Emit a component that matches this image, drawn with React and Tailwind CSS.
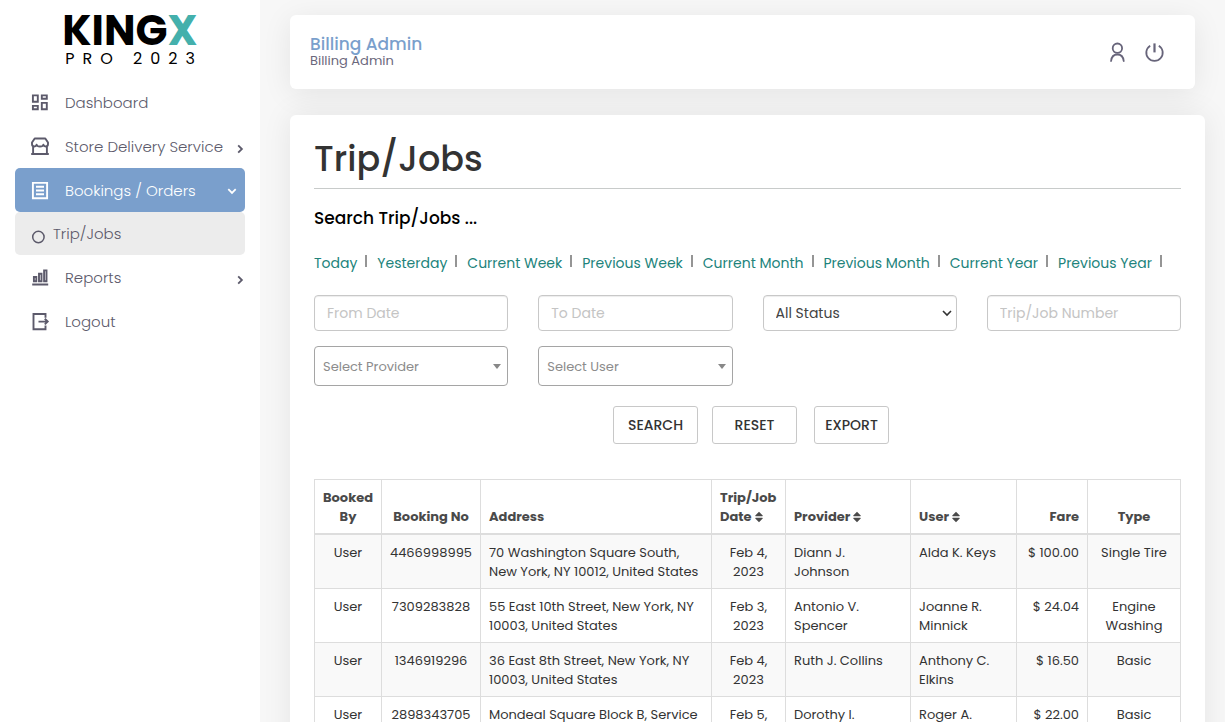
import React from "react";

function Svg({ children, className = "size-5" }) {
  return (
    <svg viewBox="0 0 20 20" className={className + " shrink-0"} fill="none" stroke="currentColor" strokeWidth="1.9" aria-hidden="true">
      {children}
    </svg>
  );
}

const DashboardIcon = () => (
  <Svg>
    <path d="M2.900 2.400h4.900v6.400H2.900zM11.800 2.400h5v3.400h-5zM2.900 12.900h4.900v3.400H2.900zM11.800 9.900h5v6.400h-5z" />
  </Svg>
);
const StoreIcon = () => (
  <Svg>
    <path d="M4.700 1.500h10.600L18 5.600v1.500c0 3.100-4 3.100-4.600.5-.6 2.600-6.200 2.600-6.800 0C6 10.200 2 10.200 2 7.100V5.600zM3.100 9v8M16.900 9v8M1.200 17h17.600" strokeLinejoin="round" />
  </Svg>
);
const OrdersIcon = () => (
  <Svg>
    <path d="M2.900 1.900h14.200v15.400H2.900zM6 5.800h8M6 9.500h8M6 13.200h8" />
  </Svg>
);
const ReportsIcon = () => (
  <Svg>
    <path d="M3.900 9h2.400v4.200H3.900zM9 5.800h2.500v7.400H9zM14.100 2.400h2.400v10.800h-2.400zM2.200 16.500h16" />
  </Svg>
);
const LogoutIcon = () => (
  <Svg>
    <path d="M15.500 5.700V2H3.500v15.200h12v-3.700M8.500 9.600h9M14.800 6.800l2.900 2.800-2.900 2.800" />
  </Svg>
);
const Chevron = ({ down }) => (
  <svg viewBox="0 0 10 10" className="size-[10px] shrink-0" fill="none" stroke="currentColor" strokeWidth="1.8" aria-hidden="true">
    <path d={down ? "M1.300 3.200L5 6.900l3.700-3.700" : "M3.200 1.300L6.900 5 3.200 8.700"} />
  </svg>
);
const SortIcon = () => (
  <svg viewBox="0 0 8 12" className="ml-[3px] inline-block h-3 w-2 align-[-2px]" fill="currentColor" aria-hidden="true">
    <path d="M4 .8L7.700 4.400q.4.800-.4.800H.7q-.8 0-.4-.8zM4 11.200L7.700 7.600q.4-.8-.4-.8H.7q-.8 0-.4.800z" />
  </svg>
);

function NavItem({ icon, label, chevron, active }) {
  return (
    <a
      href="#"
      className={
        "flex h-11 items-center rounded-[5px] pt-[2px] pl-[15px] text-[15px] font-light " +
        (active ? "bg-[#7a9fcc] pr-2 text-white" : "text-[#5c5a6b]")
      }
    >
      {icon}
      <span className="ml-[15px] flex-1 whitespace-nowrap">{label}</span>
      {chevron && <span className={active ? "" : "pt-1"}><Chevron down={active} /></span>}
    </a>
  );
}

const ranges = ["Today", "Yesterday", "Current Week", "Previous Week", "Current Month", "Previous Month", "Current Year", "Previous Year"];

const rows = [
  ["User", "4466998995", "70 Washington Square South,\nNew York, NY 10012, United States", "Feb 4,\n2023", "Diann J.\nJohnson", "Alda K. Keys", "$ 100.00", "Single Tire"],
  ["User", "7309283828", "55 East 10th Street, New York, NY\n10003, United States", "Feb 3,\n2023", "Antonio V.\nSpencer", "Joanne R.\nMinnick", "$ 24.04", "Engine\nWashing"],
  ["User", "1346919296", "36 East 8th Street, New York, NY\n10003, United States", "Feb 4,\n2023", "Ruth J. Collins", "Anthony C.\nElkins", "$ 16.50", "Basic"],
  ["User", "2898343705", "Mondeal Square Block B, Service", "Feb 5,\n2023", "Dorothy I.", "Roger A.", "$ 22.00", "Basic"],
];

const aligns = ["text-center", "text-center", "text-left", "text-center", "text-left", "text-left", "text-right", "text-center"];
const headAligns = ["text-center", "text-center", "text-left", "text-left", "text-left", "text-left", "text-right", "text-center"];
const heads = [
  "Booked\nBy",
  "Booking No",
  "Address",
  <>{"Trip/Job\nDate"}<SortIcon /></>,
  <>Provider<SortIcon /></>,
  <>User<SortIcon /></>,
  "Fare",
  "Type",
];

const field = "h-9 w-full rounded-[4px] border border-[#c8c8c8] bg-white px-3 text-[14px] text-[#444] shadow-[inset_0_1px_1px_rgba(0,0,0,0.075)] placeholder:text-[#c4c4c4] outline-none";
const button = "h-[38px] rounded-[3px] border border-[#c8c8c8] bg-white text-[14px] font-medium text-[#333]";

function ComboBox({ label }) {
  return (
    <div className="relative">
      <select aria-label={label} className="h-10 w-full appearance-none rounded-[4px] border border-[#a5a5a5] bg-white px-2 pt-px text-[13px] text-[#8c8c8c] outline-none">
        <option>{label}</option>
      </select>
      <svg viewBox="0 0 8 5" className="pointer-events-none absolute top-[18px] right-[7px] h-[5px] w-2" fill="#888" aria-hidden="true">
        <path d="M0 0h8L4 5z" />
      </svg>
    </div>
  );
}

export default function App() {
  return (
    <div className="flex h-screen overflow-hidden bg-[#f7f7f7] font-['Poppins','Inter',sans-serif]">
      <aside className="w-[260px] shrink-0 bg-white px-[15px]">
        <div className="flex h-20 flex-col items-center pt-[15px] text-black">
          <div className="text-[42px] leading-8 font-bold">
            KING<span className="text-[#44b0ac]">X</span>
          </div>
          <div className="mt-[2px] pl-2 text-[16px] leading-5 tracking-[8px]">PRO 2023</div>
        </div>
        <nav>
          <NavItem icon={<DashboardIcon />} label="Dashboard" />
          <NavItem icon={<StoreIcon />} label="Store Delivery Service" chevron />
          <NavItem icon={<OrdersIcon />} label="Bookings / Orders" chevron active />
          <a href="#" className="flex h-[43px] items-center rounded-[5px] bg-[#ececec] pt-px pl-4 text-[15px] font-light text-[#5c5a6b]">
            <svg viewBox="0 0 14 14" className="mt-[5px] size-[14px]" fill="none" stroke="currentColor" strokeWidth="1.500" aria-hidden="true">
              <circle cx="7.400" cy="7" r="5.700" />
            </svg>
            <span className="ml-2">Trip/Jobs</span>
          </a>
          <NavItem icon={<ReportsIcon />} label="Reports" chevron />
          <NavItem icon={<LogoutIcon />} label="Logout" />
        </nav>
      </aside>

      <main className="min-w-0 flex-1 overflow-y-auto pt-[15px] pr-5 pl-[30px] [scrollbar-width:none]">
        <header className="mr-[10px] flex h-[74px] items-center justify-between rounded-[6px] bg-white px-5 shadow-[0_5px_30px_rgba(0,0,0,0.08)]">
          <div>
            <div className="text-[17px] leading-[18px] font-medium text-[#7a9fcc]">Billing Admin</div>
            <div className="text-[13px] leading-4 text-[#6b687c]">Billing Admin</div>
          </div>
          <div className="flex gap-[15px] pr-[10px] text-[#67647a]">
            <button type="button" aria-label="Profile">
              <svg viewBox="0 0 22 22" className="size-[22px]" fill="none" stroke="currentColor" strokeWidth="1.800" strokeLinecap="round" aria-hidden="true">
                <circle cx="11.400" cy="7.200" r="4.700" />
                <path d="M5.100 20c.4-4 2.800-6.500 6.300-6.500s5.900 2.500 6.300 6.500" />
              </svg>
            </button>
            <button type="button" aria-label="Power">
              <svg viewBox="0 0 22 22" className="size-[22px]" fill="none" stroke="currentColor" strokeWidth="1.800" aria-hidden="true">
                <path d="M7.200 4.700a8.200 8.200 0 1 0 8.600 0" />
                <path d="M11.500 2.400v9" strokeWidth="2.200" />
              </svg>
            </button>
          </div>
        </header>

        <section className="mt-[26px] rounded-[6px] bg-white p-6 shadow-[0_0_30px_rgba(0,0,0,0.08)]">
          <h1 className="border-b border-[#c8cbca] pb-[9px] text-[35px] leading-10 font-medium text-[#333]">Trip/Jobs</h1>
          <h2 className="mt-[19px] text-[17px] leading-5 font-medium text-black">Search Trip/Jobs ...</h2>

          <div className="mt-[25px] flex whitespace-nowrap text-[14px] leading-5 text-[#21837b]">
            {ranges.map((r) => (
              <span key={r} className="flex">
                <a href="#">{r}</a>
                <span className="mt-[2px] mr-[10px] ml-2 h-3 w-[2px] bg-[#959595]" />
              </span>
            ))}
          </div>

          <form onSubmit={(e) => e.preventDefault()}>
            <div className="mt-[22px] grid grid-cols-4 gap-x-[30px] gap-y-[15px]">
              <input aria-label="From Date" placeholder="From Date" className={field} />
              <input aria-label="To Date" placeholder="To Date" className={field} />
              <div className="relative">
                <select aria-label="Status" className={field + " appearance-none"}>
                  <option>All Status</option>
                </select>
                <svg viewBox="0 0 10 10" className="pointer-events-none absolute top-[13px] right-[5px] size-[10px]" fill="none" stroke="#333" strokeWidth="1.600" aria-hidden="true">
                  <path d="M1 3l4 4 4-4" />
                </svg>
              </div>
              <input aria-label="Trip/Job Number" placeholder="Trip/Job Number" className={field} />
              <ComboBox label="Select Provider" />
              <ComboBox label="Select User" />
            </div>
            <div className="mt-5 flex justify-center gap-[17px] pl-[7px]">
              <div className="flex gap-[14px]">
                <button type="submit" className={button + " w-[85px]"}>SEARCH</button>
                <button type="reset" className={button + " w-[85px]"}>RESET</button>
              </div>
              <button type="button" className={button + " w-[75px]"}>EXPORT</button>
            </div>
          </form>

          <table className="mt-[35px] w-full table-fixed border-collapse text-[13px] leading-[19px] text-[#333]">
            <colgroup>
              <col className="w-[67px]" />
              <col className="w-[99px]" />
              <col className="w-[231px]" />
              <col className="w-[74px]" />
              <col className="w-[125px]" />
              <col className="w-[106px]" />
              <col className="w-[71px]" />
              <col className="w-[93px]" />
            </colgroup>
            <thead>
              <tr>
                {heads.map((h, i) => (
                  <th key={i} scope="col" className={"border border-b-2 border-[#ddd] px-2 pt-2 pb-[7px] align-bottom font-bold whitespace-pre text-[#4a4a4a] " + headAligns[i]}>
                    {h}
                  </th>
                ))}
              </tr>
            </thead>
            <tbody>
              {rows.map((row) => (
                <tr key={row[1]} className="odd:bg-[#f9f9f9]">
                  {row.map((cell, i) => (
                    <td key={i} className={"border border-[#ddd] px-2 pt-2 pb-[7px] align-top whitespace-pre " + aligns[i]}>
                      {cell}
                    </td>
                  ))}
                </tr>
              ))}
            </tbody>
          </table>
        </section>
      </main>
    </div>
  );
}
